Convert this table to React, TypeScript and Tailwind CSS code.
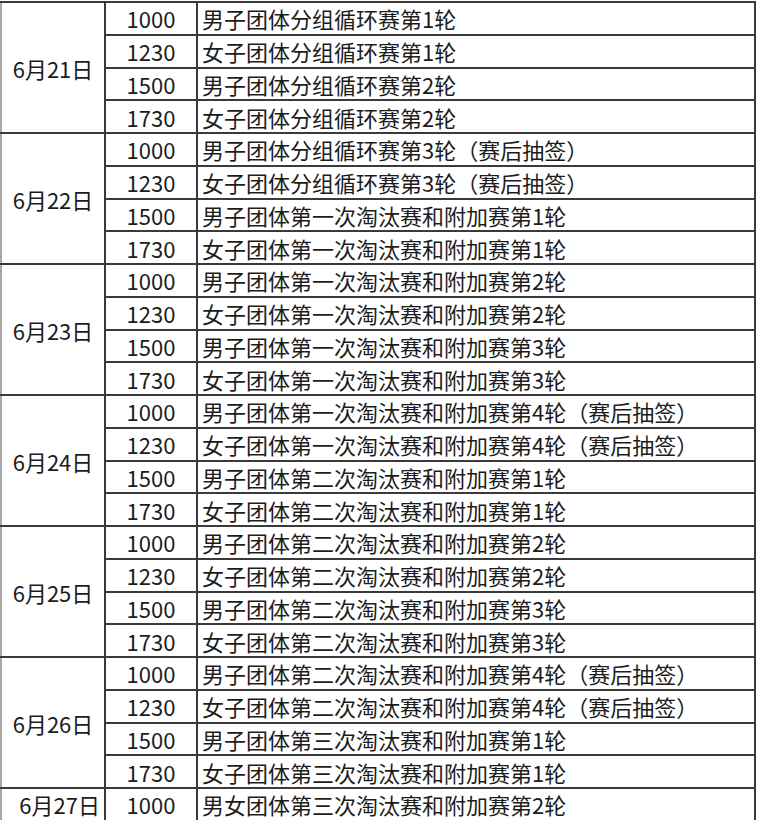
const days = [
  {
    date: '6月21日',
    rows: [
      ['1000', '男子团体分组循环赛第1轮'],
      ['1230', '女子团体分组循环赛第1轮'],
      ['1500', '男子团体分组循环赛第2轮'],
      ['1730', '女子团体分组循环赛第2轮'],
    ],
  },
  {
    date: '6月22日',
    rows: [
      ['1000', '男子团体分组循环赛第3轮（赛后抽签）'],
      ['1230', '女子团体分组循环赛第3轮（赛后抽签）'],
      ['1500', '男子团体第一次淘汰赛和附加赛第1轮'],
      ['1730', '女子团体第一次淘汰赛和附加赛第1轮'],
    ],
  },
  {
    date: '6月23日',
    rows: [
      ['1000', '男子团体第一次淘汰赛和附加赛第2轮'],
      ['1230', '女子团体第一次淘汰赛和附加赛第2轮'],
      ['1500', '男子团体第一次淘汰赛和附加赛第3轮'],
      ['1730', '女子团体第一次淘汰赛和附加赛第3轮'],
    ],
  },
  {
    date: '6月24日',
    rows: [
      ['1000', '男子团体第一次淘汰赛和附加赛第4轮（赛后抽签）'],
      ['1230', '女子团体第一次淘汰赛和附加赛第4轮（赛后抽签）'],
      ['1500', '男子团体第二次淘汰赛和附加赛第1轮'],
      ['1730', '女子团体第二次淘汰赛和附加赛第1轮'],
    ],
  },
  {
    date: '6月25日',
    rows: [
      ['1000', '男子团体第二次淘汰赛和附加赛第2轮'],
      ['1230', '女子团体第二次淘汰赛和附加赛第2轮'],
      ['1500', '男子团体第二次淘汰赛和附加赛第3轮'],
      ['1730', '女子团体第二次淘汰赛和附加赛第3轮'],
    ],
  },
  {
    date: '6月26日',
    rows: [
      ['1000', '男子团体第二次淘汰赛和附加赛第4轮（赛后抽签）'],
      ['1230', '女子团体第二次淘汰赛和附加赛第4轮（赛后抽签）'],
      ['1500', '男子团体第三次淘汰赛和附加赛第1轮'],
      ['1730', '女子团体第三次淘汰赛和附加赛第1轮'],
    ],
  },
  {
    date: '6月27日',
    rows: [['1000', '男女团体第三次淘汰赛和附加赛第2轮']],
  },
]

function App() {
  return (
    <div
      className="w-[757px] h-[820px] overflow-hidden bg-white pt-px text-[#1c1c1c]"
      style={{ fontFamily: '"Noto Sans CJK SC", "Noto Sans", sans-serif' }}
    >
      <table className="w-[756px] border-collapse table-fixed text-[22px] leading-none">
        <colgroup>
          <col className="w-[104px]" />
          <col className="w-[92px]" />
          <col />
        </colgroup>
        <tbody>
          {days.map((day) =>
            day.rows.map((row, i) => (
              <tr key={day.date + row[0]} className="h-[32.75px]">
                {i === 0 && (
                  <td
                    rowSpan={day.rows.length}
                    className={
                      'border-2 border-[#3a3a3a] border-l-[#a8a8a8] align-middle ' +
                      (day.rows.length === 1 ? 'text-right pr-1' : 'text-center')
                    }
                  >
                    {day.date}
                  </td>
                )}
                <td className="border-2 border-[#3a3a3a] text-center align-middle">{row[0]}</td>
                <td className="border-2 border-[#3a3a3a] pl-1 align-middle whitespace-nowrap">{row[1]}</td>
              </tr>
            ))
          )}
        </tbody>
      </table>
    </div>
  )
}

export default App
